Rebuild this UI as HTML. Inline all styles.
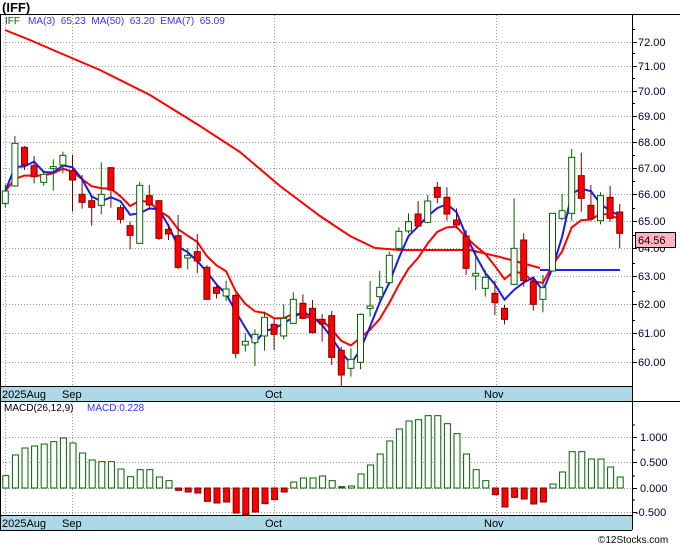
<!DOCTYPE html>
<html><head><meta charset="utf-8"><style>
html,body{margin:0;padding:0;background:#fff;width:680px;height:546px;overflow:hidden;font-family:"Liberation Sans",sans-serif}
svg text{font-family:"Liberation Sans",sans-serif}
</style></head><body>
<svg id="s" width="680" height="546" xmlns="http://www.w3.org/2000/svg">
<text x="2" y="12" font-size="13" font-weight="bold" fill="#000">(IFF)</text>
<g id="grid"></g>
<g id="lines"></g>
<g id="cand"></g>
<rect x="0" y="387" width="632" height="14" fill="#add8e6"/>
<rect x="0" y="516" width="632" height="14" fill="#add8e6"/>
<g font-size="11" fill="#000">
<text x="2" y="398">2025Aug</text><text x="62" y="398">Sep</text><text x="265" y="398">Oct</text><text x="484" y="398">Nov</text>
<text x="2" y="527">2025Aug</text><text x="62" y="527">Sep</text><text x="265" y="527">Oct</text><text x="484" y="527">Nov</text>
</g>
<g font-size="10"><text x="5" y="24" fill="#006400">IFF</text><text x="28" y="24" fill="#3333ff" xml:space="preserve">MA(3)  65.23  MA(50)  63.20  EMA(7)  65.09</text>
<text x="4" y="411" fill="#000">MACD(26,12,9)</text><text x="87" y="411" fill="#3333ff">MACD:0.228</text></g>
<g id="axis" font-size="11" fill="#000033"></g>
<g stroke="#000" stroke-width="1" fill="none">
<line x1="0" y1="14.5" x2="680" y2="14.5"/>
<line x1="0.5" y1="14" x2="0.5" y2="530"/>
<line x1="632.5" y1="14" x2="632.5" y2="530"/>
<line x1="0" y1="401.5" x2="680" y2="401.5"/>
<line x1="0" y1="530.5" x2="632" y2="530.5"/>
<line x1="0" y1="386.5" x2="632" y2="386.5"/>
<line x1="0" y1="515.5" x2="632" y2="515.5"/>
</g>
<rect x="635.5" y="232.5" width="40" height="15" fill="#ffb6c1" stroke="#000"/>
<text x="638" y="244" font-size="11" fill="#000">64.56</text>
<text x="598" y="543" font-size="10" fill="#000">©12Stocks.com</text>
</svg>
<script>
var NS="http://www.w3.org/2000/svg";
function el(p,t,a){var e=document.createElementNS(NS,t);for(var k in a)e.setAttribute(k,a[k]);document.getElementById(p).appendChild(e);return e;}
var pl=[[72,42],[71,66],[70,91],[69,116],[68,142],[67,168],[66,194],[65,221],[64,248],[63,276],[62,304],[61,333],[60,362]];
pl.forEach(function(a){el("grid","line",{x1:0,x2:632,y1:a[1]+.5,y2:a[1]+.5,stroke:"#999","stroke-dasharray":"1,2"});
 var t=el("axis","text",{x:638,y:a[1]+4});t.textContent=a[0].toFixed(2);
 el("axis","line",{x1:632,x2:637,y1:a[1]+.5,y2:a[1]+.5,stroke:"#000"});
 el("axis","line",{x1:632,x2:635,y1:a[1]-12.5,y2:a[1]-12.5,stroke:"#000"});});
[[1,437,"1.000"],[.5,462,"0.500"],[0,488,"0.000"],[-.5,512,"-0.500"]].forEach(function(a){
 el("grid","line",{x1:0,x2:632,y1:a[1]+.5,y2:a[1]+.5,stroke:"#999","stroke-dasharray":"1,2"});
 var t=el("axis","text",{x:a[0]<0?635:640,y:a[1]+4});t.textContent=a[2];
 el("axis","line",{x1:632,x2:637,y1:a[1]+.5,y2:a[1]+.5,stroke:"#000"});
 el("axis","line",{x1:632,x2:635,y1:a[1]-12,y2:a[1]-12,stroke:"#000"});});
[5,72,274,496].forEach(function(x){el("grid","line",{x1:x+.5,x2:x+.5,y1:15,y2:386,stroke:"#999","stroke-dasharray":"1,2"});el("grid","line",{x1:x+.5,x2:x+.5,y1:402,y2:515,stroke:"#999","stroke-dasharray":"1,2"});});
var z3=[[163,183,220,232,1],[18,40,168,170,1],[48,52,105,120,0],[78,107,140,160,0],[120,133,157,167,1],[88,110,116,182,1],[65,76,105,130,1],[75,122,150,245,0],[135,193,217,236,0],[200,212,232,287,0],[97,193,226,253,1],[113,113,180,233,0],[225,233,268,280,0],[275,287,316,358,0],[155,166,340,340,1],[165,197,225,240,0],[210,212,325,330,0],[282,298,312,330,0],[255,317,412,418,0],[355,376,384,418,1],[312,365,393,430,0],[405,412,508,508,0]];
var z4=[[340,352,370,385,0],[332,357,378,393,1],[370,376,550,565,0],[490,514,525,545,1],[478,493,518,588,1],[425,442,498,542,1],[445,463,493,540,0],[403,445,498,508,1],[367,388,460,462,1],[373,400,445,448,0],[390,415,488,490,0],[432,448,462,515,0],[423,437,562,585,0],[530,541,615,650,0],[535,568,595,620,1],[430,433,577,598,1],[333,408,415,440,1],[302,352,380,390,1],[245,256,338,345,1],[172,184,235,240,1],[130,155,183,190,1],[93,132,168,170,0]];
var z5=[[165,183,247,250,1],[126,142,172,190,0],[142,172,222,242,0],[205,240,255,265,0],[270,288,385,405,0],[330,400,408,450,1],[390,412,445,470,1],[422,460,488,525,0],[495,505,538,553,0],[175,325,433,435,1],[280,300,422,440,0],[410,425,493,512,0],[405,443,478,517,1],[220,220,393,395,1],[162,212,235,240,1],[27,52,220,242,1],[38,107,175,215,0],[135,196,235,240,0],[157,167,242,253,1],[138,172,235,245,0],[192,216,280,325,0]];
var C=[];
z3.forEach(function(c){C.push([130+c[0]/3,130+c[1]/3,130+c[2]/3,130+c[3]/3,c[4]]);});
z4.forEach(function(c){C.push([170+c[0]/3,170+c[1]/3,170+c[2]/3,170+c[3]/3,c[4]]);});
z5.forEach(function(c){C.push([140+c[0]/3,140+c[1]/3,140+c[2]/3,140+c[3]/3,c[4]]);});
function X(i){return 5.3+9.6*i;}
function P(y){return 72*Math.exp(-(y-42)/1755);}
function Y(p){return 42+1755*Math.log(72/p);}
var closes=[];
C.forEach(function(c,i){var x=X(i),g=c[4];closes.push(P(g?c[1]:c[2]));
 el("cand","line",{x1:x,x2:x,y1:c[0],y2:c[3],stroke:g?"#006400":"#800000"});
 el("cand","rect",{x:x-3,y:c[1],width:6,height:Math.max(1,c[2]-c[1]),fill:g?"#fff":"#ff0000",stroke:g?"#006400":"#800000"});});
el("lines","polyline",{points:"5,30 30,40 60,53 100,70 150,95 200,126 240,152 280,186 320,216 350,236 375,248 400,250 470,250 500,257 540,268",fill:"none",stroke:"#ff0000","stroke-width":2});
el("lines","polyline",{points:"540,270 620,270",fill:"none",stroke:"#2222ee","stroke-width":2});
var ma=[],em=[],e=closes[0];
closes.forEach(function(c,i){var a=closes.slice(Math.max(0,i-2),i+1);ma.push(a.reduce(function(s,v){return s+v},0)/a.length);e=i?e+(c-e)*0.25:c;em.push(e);});
el("lines","polyline",{points:em.map(function(v,i){return X(i)+","+Y(v)}).join(" "),fill:"none",stroke:"#ff0000","stroke-width":2});
el("lines","polyline",{points:ma.map(function(v,i){return X(i)+","+Y(v)}).join(" "),fill:"none",stroke:"#1a1aee","stroke-width":2});
var mz=[288,226,205,199,193,186,175,190,220,241,246,246,268,291,270,270,292,303,332,337,340,365,370,367,400,405,397,372,360,337,307,295,295,289,303,321,319,283,256,223,184,148,124,120,108,108,132,162,223,270,303,345,382,353,358,373,367,313,277,216,216,238,238,262,292];
mz.forEach(function(z,i){var h=(325-z)/3,x=X(i);
 if(h>=0)el("cand","rect",{x:x-2.5,y:488-h,width:6,height:Math.max(1,h),fill:i==35?"#006400":"#fff",stroke:"#006400"});
 else el("cand","rect",{x:x-2.5,y:488,width:6,height:-h,fill:"#ff0000",stroke:"#800000"});});
</script>
</body></html>
